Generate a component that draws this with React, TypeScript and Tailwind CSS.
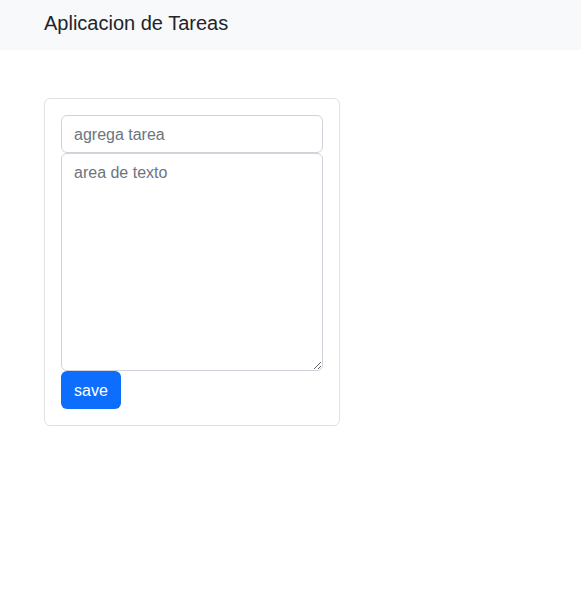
export default function App() {
  return (
    <div className="min-h-screen bg-white font-['Liberation_Sans',Arial,sans-serif] text-[#212529]">
      <nav className="h-[50px] bg-[#f8f9fa] pl-11 pt-2">
        <span className="text-[20px] leading-[30px]">Aplicacion de Tareas</span>
      </nav>
      <div className="mt-12 ml-11 w-[296px] rounded-md border border-[#dee2e6] p-4">
        <input
          type="text"
          placeholder="agrega tarea"
          className="block h-[38px] w-full rounded-md border border-[#ced4da] px-3 pt-px text-base leading-6 outline-none placeholder:text-[#6c757d]"
        />
        <textarea
          placeholder="area de texto"
          className="block h-[218px] w-full resize-y rounded-md border border-[#ced4da] px-3 pt-[7px] pb-1.5 text-base leading-6 outline-none placeholder:text-[#6c757d]"
        />
        <button className="h-[38px] w-[60px] rounded-md bg-[#0d6efd] pt-px text-base leading-6 text-white">
          save
        </button>
      </div>
    </div>
  )
}
